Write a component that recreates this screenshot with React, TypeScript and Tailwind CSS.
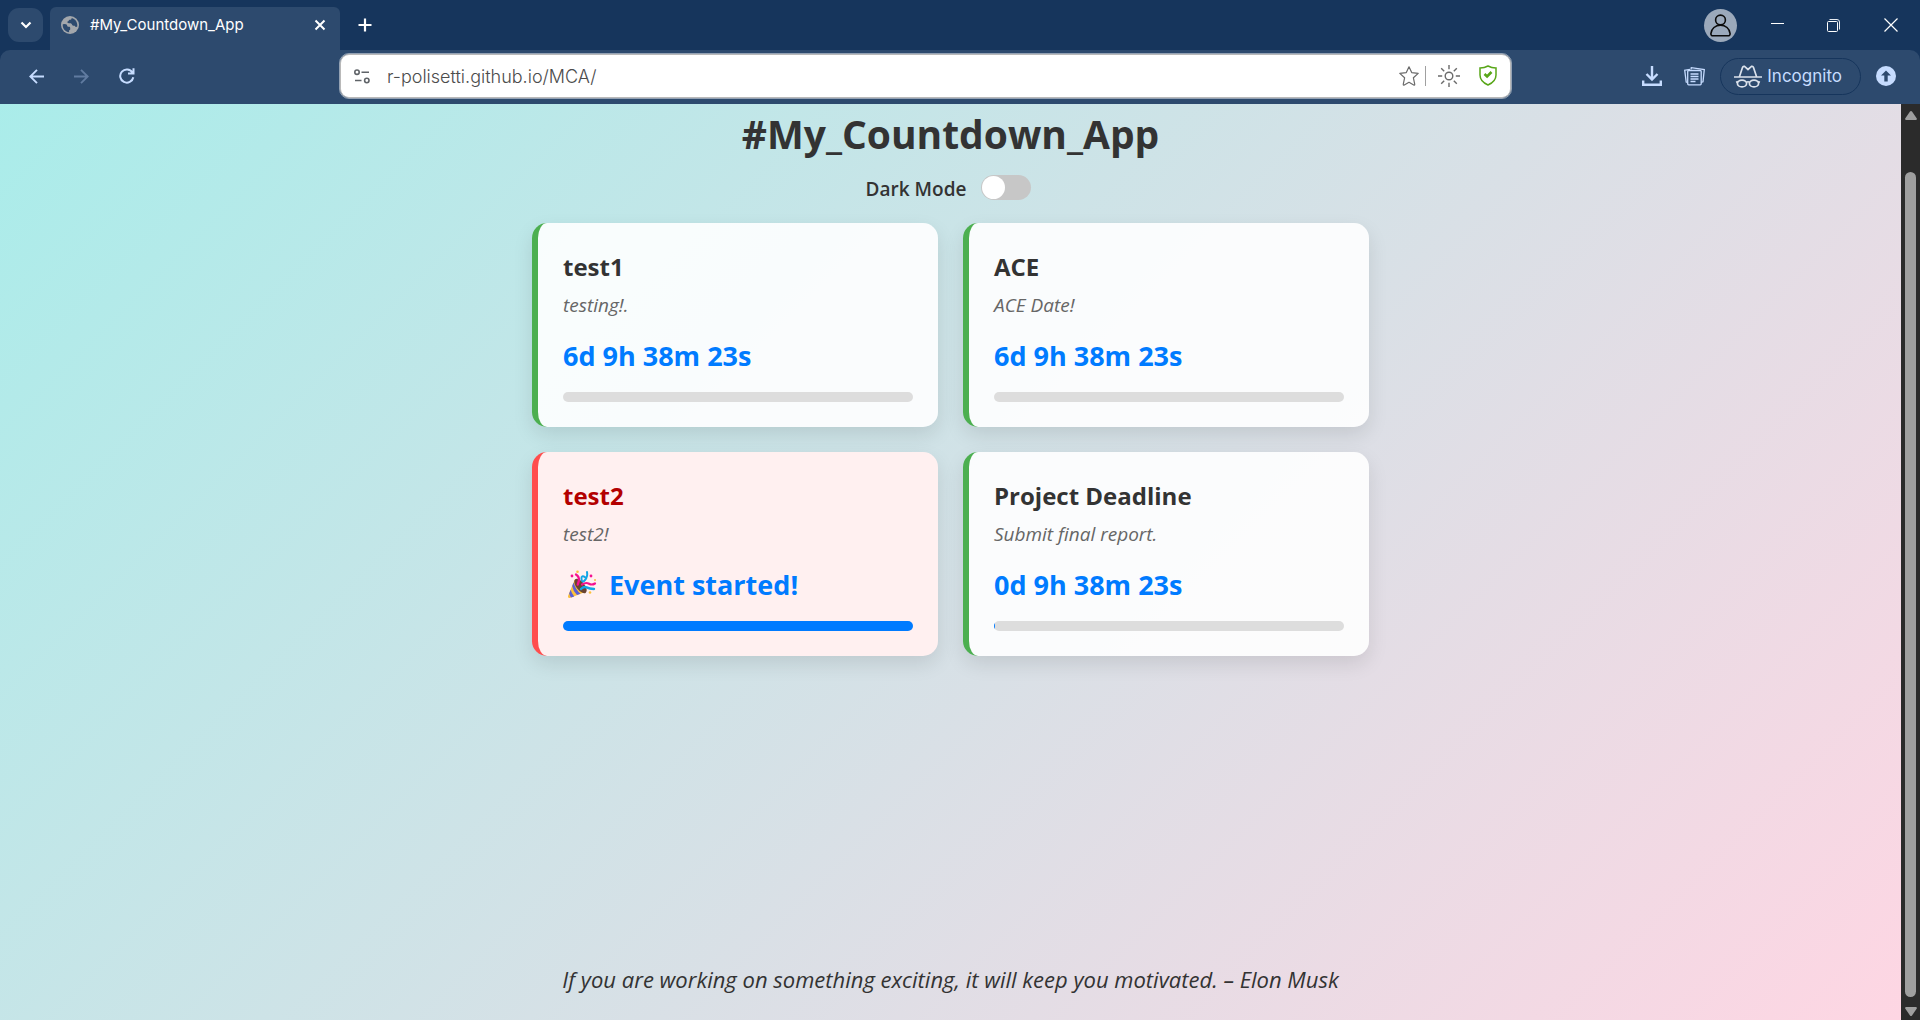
import { useState } from "react";

type Countdown = {
  title: string;
  note: string;
  time: string;
  progress: number;
  started?: boolean;
};

const countdowns: Countdown[] = [
  { title: "test1", note: "testing!.", time: "6d 9h 38m 23s", progress: 0 },
  { title: "ACE", note: "ACE Date!", time: "6d 9h 38m 23s", progress: 0 },
  { title: "test2", note: "test2!", time: "Event started!", progress: 100, started: true },
  { title: "Project Deadline", note: "Submit final report.", time: "0d 9h 38m 23s", progress: 0.3 },
];

function GlobeIcon() {
  return (
    <svg width="18" height="18" viewBox="0 0 18 18" aria-hidden="true">
      <circle cx="9" cy="9" r="9" fill="#a3a7ac" />
      <path
        d="M1.800 8.300 3.800 8c1.500 0 2.300.7 2.400 1.800.1.900.6 1 1.600 1 1 0 1.400.4 1.400 1.300v1.200c0 .7-.6 1-1.200 1.200l.1 1.700C4.500 15.800 1.700 12.900 1.700 9zM10.800 1.900c-.2 1.400-1 1.700-2.200 1.900-.9.2-.8 1.100-1.400 1.500-.5.3-.8.2-.8.900 0 .9 1.100 1 2.300 1 1.700 0 2.200.7 2.400 1.600.2.8 1.100 1 1.900 1 .9 0 1.400.4 1.400 1.100l1.700-.1c.2-.6.2-1.200.2-1.800 0-3.400-2.300-6.200-5.500-7.100z"
        fill="#2d4a6e"
      />
    </svg>
  );
}

function PartyIcon() {
  return (
    <svg width="30" height="30" viewBox="0 0 30 30" aria-hidden="true">
      <path d="M8 9 1 26q-.4 2.500 2 2l15-6z" fill="#fcc13b" />
      <path d="M6.600 12.500q2 7.500 7 11.200l-3.600 1.400Q6 21 5.200 16zM3.600 19.800q1.200 4 3.600 6.600l-3 1.100q-1.600-1.800-2-4z" fill="#5b5fd6" />
      <ellipse cx="13.500" cy="16" rx="4.200" ry="8.600" transform="rotate(-38 13.500 16)" fill="#6b4430" />
      <path d="M9 4.500q3.500 2 2.800 6.500l-1 3.500" fill="none" stroke="#f5128f" strokeWidth="2.400" strokeLinecap="round" />
      <path d="M15 14.500q4-2.500 7-.8t6-.2" fill="none" stroke="#f5128f" strokeWidth="2.200" strokeLinecap="round" />
      <path d="M14 19q2.500-3 5.500-1.600t7.500 1.600" fill="none" stroke="#12a5e6" strokeWidth="2.400" strokeLinecap="round" />
      <path d="M20 2q1 4.500-2 8t-3.500-1 4-1.500" fill="none" stroke="#12a5e6" strokeWidth="2" strokeLinecap="round" />
      <circle cx="5" cy="6" r="1.400" fill="#f5128f" />
      <circle cx="24" cy="6" r="1.400" fill="#f5128f" />
      <circle cx="10.500" cy="1.700" r="1.300" fill="#fcc13b" />
      <circle cx="23" cy="22.500" r="1.300" fill="#fcc13b" />
      <circle cx="28" cy="10" r="1" fill="#fcc13b" />
    </svg>
  );
}

function TabStrip() {
  return (
    <div className="flex h-[50px] items-stretch bg-[#16355c] pl-2">
      <button aria-label="Search tabs" className="mt-2 grid h-[34px] w-[35px] place-items-center rounded-[11px] bg-[#2d4a6e]">
        <svg width="12" height="8" viewBox="0 0 12 8" fill="none" stroke="#fff" strokeWidth="2.200" aria-hidden="true">
          <path d="M1.500 1.500 6 6l4.500-4.500" />
        </svg>
      </button>
      <div className="mt-[7px] ml-[7px] flex w-[290px] items-center gap-[11px] rounded-t-md bg-[#2d4a6e] pr-[14px] pb-2 pl-[11px]">
        <GlobeIcon />
        <span className="flex-1 text-[15px] leading-5 text-white">#My_Countdown_App</span>
        <button aria-label="Close tab">
          <svg width="12" height="12" viewBox="0 0 12 12" fill="none" stroke="#fff" strokeWidth="2" aria-hidden="true">
            <path d="m1.500 1.500 9 9m0-9-9 9" />
          </svg>
        </button>
      </div>
      <button aria-label="New tab" className="ml-[18px]">
        <svg width="14" height="14" viewBox="0 0 14 14" fill="none" stroke="#fff" strokeWidth="2.200" aria-hidden="true">
          <path d="M7 .5v13M.5 7h13" />
        </svg>
      </button>
      <div className="ml-auto flex items-center">
        <button aria-label="Profile" className="grid size-[33px] place-items-center rounded-full bg-[#9ba9bb]">
          <svg width="21" height="23" viewBox="0 0 21 23" fill="none" stroke="#0b0b0b" strokeWidth="1.600" aria-hidden="true">
            <circle cx="10.500" cy="6" r="4.900" />
            <path d="M3 21.800c-1.500 0-2.200-.9-2.100-2.200C1.300 14.500 5.500 11.200 10.500 11.200s9.200 3.300 9.600 8.400c.1 1.300-.6 2.200-2.100 2.200z" />
          </svg>
        </button>
        <button aria-label="Minimize" className="ml-3 grid h-[50px] w-14 place-items-center">
          <span className="mb-[3px] h-px w-[13px] bg-white" />
        </button>
        <button aria-label="Restore" className="grid h-[50px] w-14 place-items-center">
          <svg width="13" height="13" viewBox="0 0 13 13" fill="none" aria-hidden="true">
            <path d="M2.500 .5h7.500q2.500 0 2.500 2.500v7.500" stroke="#e8edf3" />
            <rect x=".5" y="2.500" width="10" height="10" rx="1" stroke="#fff" />
          </svg>
        </button>
        <button aria-label="Close window" className="grid h-[50px] w-[59px] place-items-center">
          <svg width="14" height="14" viewBox="0 0 14 14" stroke="#fff" strokeWidth="1.200" aria-hidden="true">
            <path d="m.5.500 13 13m0-13-13 13" />
          </svg>
        </button>
      </div>
    </div>
  );
}

function Toolbar() {
  return (
    <div className="bg-[#16355c]">
      <div className="flex h-[54px] items-center rounded-t-[10px] bg-[#2d4a6e] pb-0.5">
        <nav className="flex w-[340px] items-center gap-[30px] pl-[29px] text-[#c6dcff]">
          <button aria-label="Back">
            <svg width="15" height="15" viewBox="0 0 15 15" fill="none" stroke="currentColor" strokeWidth="1.900" aria-hidden="true">
              <path d="M15 7.500H1.500M8 .8 1.300 7.500 8 14.200" />
            </svg>
          </button>
          <button aria-label="Forward" className="text-[#607ba0]">
            <svg width="15" height="15" viewBox="0 0 15 15" fill="none" stroke="currentColor" strokeWidth="1.900" aria-hidden="true">
              <path d="M0 7.500h13.500M7 .8l6.700 6.700L7 14.200" />
            </svg>
          </button>
          <button aria-label="Reload">
            <svg width="16" height="16" viewBox="0 0 16 16" fill="none" stroke="currentColor" strokeWidth="2" aria-hidden="true">
              <path d="M14.300 9.200A6.600 6.600 0 1 1 13.400 4.500M9 5.600h5.500V.2" />
            </svg>
          </button>
        </nav>
        <div className="flex h-11 flex-1 items-center rounded-[9px] border border-[#b9b9b9] bg-white px-[13px] outline outline-[#d9dde2]/60">
          <svg width="16" height="15" viewBox="0 0 16 15" fill="none" stroke="#5f6368" strokeWidth="1.600" aria-hidden="true">
            <circle cx="3" cy="3.200" r="2.200" />
            <path d="M7.500 3.200H15M1 11.500h6.500" />
            <circle cx="12.800" cy="11.500" r="2.200" />
          </svg>
          <input
            aria-label="Address"
            defaultValue="r-polisetti.github.io/MCA/"
            className="ml-[17px] min-w-0 flex-1 text-[18px] font-light text-[#4c4c4c] outline-none"
          />
          <button aria-label="Bookmark this page">
            <svg width="20" height="20" viewBox="0 0 20 20" fill="none" stroke="#6a6a6a" strokeWidth="1.200" strokeLinejoin="round" aria-hidden="true">
              <path d="m10 .8 2.700 5.800 6.500.8-4.800 4.400 1.300 6.400q.1 1.300-1 .8L10 16.300 5.300 19q-1.100.5-1-.8l1.300-6.400L.8 7.400l6.500-.8z" />
            </svg>
          </button>
          <span className="mx-[7px] ml-1.5 h-5 w-px bg-[#a0a0a0]" />
          <button aria-label="Brightness" className="ml-[5px]">
            <svg width="22" height="22" viewBox="0 0 22 22" fill="none" stroke="#6a6a6a" strokeWidth="1.400" aria-hidden="true">
              <circle cx="11" cy="11" r="3.800" />
              <path d="M11 0v4.200M11 17.800V22M0 11h4.200M17.800 11H22M3.200 3.200l3 3M15.800 15.800l3 3M18.800 3.200l-3 3M6.200 15.800l-3 3" />
            </svg>
          </button>
          <button aria-label="Site protection" className="mb-0.5 ml-[19px]">
            <svg width="18" height="21" viewBox="0 0 18 21" fill="none" stroke="#58a618" strokeWidth="1.500" aria-hidden="true">
              <path d="M9 1q3.500 2 8 2v7q0 6.500-8 10Q1 16.500 1 10V3q4.500 0 8-2z" />
              <path d="m5.500 9 2.600 2.500L12.500 7" strokeWidth="2.600" />
            </svg>
          </button>
        </div>
        <div className="flex w-[409px] items-center justify-end pr-6 text-[#c6dcff]">
          <button aria-label="Downloads">
            <svg width="20" height="20" viewBox="0 0 20 20" fill="none" stroke="currentColor" strokeWidth="2.400" aria-hidden="true">
              <path d="M10 0v13M4.500 8l5.500 5.500L15.500 8M1.200 14.500v4.300h17.600v-4.300" />
            </svg>
          </button>
          <button aria-label="Reading list" className="ml-[22px]">
            <svg width="21" height="19" viewBox="0 0 21 19" fill="none" stroke="currentColor" strokeWidth="1.300" aria-hidden="true">
              <path d="M3.500 15.500 2.200 15 .7 3.200 6 2.500M7 2.500 7.300.7l13 1.800-1.300 12.300-2 .7" />
              <rect x="3.700" y="3.500" width="13.500" height="14.300" rx="1" />
              <path d="M6.500 7h8M6.500 9.500h8M6.500 12h8M6.500 14.500h5" />
            </svg>
          </button>
          <button className="ml-[15px] flex h-[37px] items-center gap-[5px] rounded-full border border-[#16355c] pr-[18px] pl-[13px]">
            <svg width="28" height="23" viewBox="0 0 28 23" fill="none" stroke="#dbe2ec" strokeWidth="1.700" aria-hidden="true">
              <path d="M0 12h28M5.500 11.500 8.500 2.500Q9 .9 10.600 1.400L14 4.500l3.400-3.100q1.600-.5 2.100 1.100l3 9" />
              <ellipse cx="8" cy="18.500" rx="4.600" ry="3.400" />
              <ellipse cx="20" cy="18.500" rx="4.600" ry="3.400" />
              <path d="M12.300 17.200q1.700-.9 3.400 0M2 17.200l2-.6M24 16.600l2 .6" />
            </svg>
            <span className="text-[17px] leading-5">Incognito</span>
          </button>
          <button aria-label="Update available" className="ml-[15px]">
            <svg width="20" height="20" viewBox="0 0 20 20" aria-hidden="true">
              <circle cx="10" cy="10" r="10" fill="#c6dcff" />
              <path d="m10 4.500 5 5h-3.300v6H8.300v-6H5z" fill="#2d4a6e" />
            </svg>
          </button>
        </div>
      </div>
    </div>
  );
}

function CountdownCard({ item }: { item: Countdown }) {
  return (
    <article
      className={`rounded-[15px] border-l-[6px] p-[25px] shadow-[0_8px_20px_rgba(0,0,0,0.1)] ${
        item.started ? "border-[#ff4d4d] bg-[#fff0f0]" : "border-[#4caf50] bg-white/90"
      }`}
    >
      <h2 className={`text-[24px] leading-[38px] font-bold ${item.started ? "text-[#b30000]" : "text-[#333]"}`}>{item.title}</h2>
      <p className="mt-[7px] text-[19px] leading-6 text-[#666] italic">{item.note}</p>
      <p className="mt-[19px] flex items-center text-[27px] leading-10 font-bold text-[#007bff]">
        {item.started && (
          <span className="mr-3 ml-1">
            <PartyIcon />
          </span>
        )}
        {item.time}
      </p>
      <div
        role="progressbar"
        aria-label={item.title}
        aria-valuenow={item.progress}
        className="mt-4 h-2.5 overflow-hidden rounded-[5px] bg-[#ddd]"
      >
        <div className="h-full bg-[#007bff]" style={{ width: `${item.progress}%` }} />
      </div>
    </article>
  );
}

function Scrollbar() {
  return (
    <div aria-hidden="true" className="flex w-[19px] flex-col items-center bg-[#2b2b2b] pt-[7px] pb-1">
      <svg width="12" height="9" viewBox="0 0 12 9">
        <path d="M6 0q.6 0 1 .6l4.800 6.900q.4 1.500-1 1.500H1.200q-1.400 0-1-1.500L5 .6Q5.400 0 6 0z" fill="#9f9f9f" />
      </svg>
      <div className="mt-[52px] mb-2.5 w-[11px] flex-1 rounded-full bg-[#9f9f9f]" />
      <svg width="12" height="9" viewBox="0 0 12 9">
        <path d="M6 9q.6 0 1-.6l4.800-6.900q.4-1.500-1-1.500H1.200q-1.400 0-1 1.500L5 8.400Q5.400 9 6 9z" fill="#9f9f9f" />
      </svg>
    </div>
  );
}

export default function App() {
  const [dark, setDark] = useState(false);
  return (
    <div className="flex min-h-screen flex-col font-['Inter',sans-serif]">
      <header>
        <TabStrip />
        <Toolbar />
      </header>
      <div className="flex flex-1">
        <main className="flex flex-1 flex-col items-center bg-[linear-gradient(135deg,#a8edea,#fed6e3)] bg-[length:100%_982px] bg-bottom px-5 font-['Open_Sans','Noto_Sans',sans-serif] text-[#333]">
          <h1 className="mt-1 text-[39px] leading-[52px] font-bold">#My_Countdown_App</h1>
          <div className="mt-[14px] flex h-[27px] items-center gap-[15px] pr-1">
            <label htmlFor="dark-mode" className="pt-0.5 text-[19px] leading-6 font-semibold">
              Dark Mode
            </label>
            <input
              id="dark-mode"
              type="checkbox"
              role="switch"
              checked={dark}
              onChange={() => setDark(!dark)}
              className="flex h-[25px] w-[50px] appearance-none items-center rounded-full bg-[#c7c7c7] px-px before:size-[23px] before:rounded-full before:bg-white checked:bg-[#007bff] checked:before:ml-auto"
            />
          </div>
          <section className="mt-[22px] grid w-full max-w-[837px] grid-cols-2 gap-[25px]">
            {countdowns.map((item) => (
              <CountdownCard key={item.title} item={item} />
            ))}
          </section>
          <footer className="mt-auto pt-10 pb-[26px]">
            <p className="text-[22px] leading-[30px] italic">
              If you are working on something exciting, it will keep you motivated. – Elon Musk
            </p>
          </footer>
        </main>
        <Scrollbar />
      </div>
    </div>
  );
}
